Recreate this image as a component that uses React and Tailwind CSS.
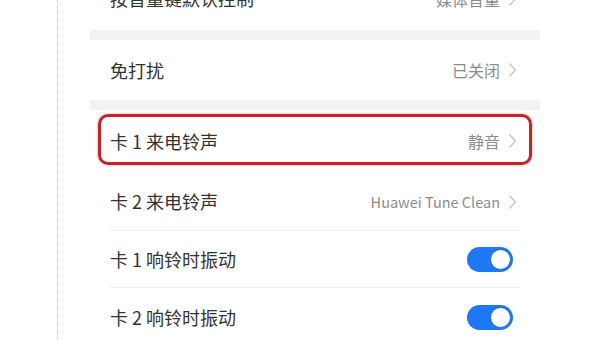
import { useState } from "react";

const font = { fontFamily: '"Noto Sans CJK SC", "Noto Sans", sans-serif' };

// thin grey arrow at the end of a row
function Chevron() {
  return (
    <svg width="9" height="16" viewBox="0 0 9 16" className="ml-[8px] shrink-0">
      <polyline
        points="1.5,1.5 7.5,8 1.5,14.5"
        fill="none"
        stroke="#c4c4c4"
        strokeWidth="1.3"
      />
    </svg>
  );
}

function Toggle({ on, onClick }) {
  return (
    <button
      onClick={onClick}
      className={`mr-[4px] w-[46px] h-[25px] rounded-full flex items-center p-[2px] ${
        on ? "bg-[#1f78f3] justify-end" : "bg-[#d6d6d6] justify-start"
      }`}
    >
      <span className="block w-[21px] h-[21px] rounded-full bg-white border border-[#1a66d0]" />
    </button>
  );
}

function Row({ label, value, toggle, height, divider, children }) {
  return (
    <div className={`relative ${height}`}>
      <div className="h-full flex items-center pl-[20px] pr-[23px]">
        <span className="text-[18px] text-[#333333] flex-1">{label}</span>
        {value && (
          <span className="flex items-center text-[16px] text-[#8c8c8c]">
            {value}
            <Chevron />
          </span>
        )}
        {toggle}
      </div>
      {divider && (
        <div className="absolute bottom-0 left-[20px] right-[20px] h-px bg-[#ececec]" />
      )}
      {children}
    </div>
  );
}

export default function App() {
  const [vib1, setVib1] = useState(true);
  const [vib2, setVib2] = useState(true);

  return (
    <div className="w-[600px] h-[340px] overflow-hidden bg-white flex" style={font}>
      {/* page edge */}
      <div className="w-[57px] shrink-0" />
      <div className="w-0 h-full border-l border-dotted border-[#c9c9c9]" />
      <div className="w-[32px] shrink-0" />

      {/* settings list */}
      <div className="w-[450px] shrink-0 -mt-[33px]">
        <Row label="按音量键默认控制" value="媒体音量" height="h-[63px]" />
        <div className="h-[10px] bg-[#f3f3f3]" />
        <Row label="免打扰" value="已关闭" height="h-[60px]" />
        <div className="h-[10px] bg-[#f3f3f3]" />
        <Row label="卡 1 来电铃声" value="静音" height="h-[62px]">
          {/* highlight box */}
          <div className="absolute left-[8px] right-[8px] top-[4px] bottom-[7px] rounded-[10px] border-[3px] border-[#c3242c] shadow-[0_0_3px_rgba(195,36,44,0.45)]" />
        </Row>
        <Row
          label="卡 2 来电铃声"
          value={<span className="text-[14.5px]">Huawei Tune Clean</span>}
          height="h-[59px]"
          divider
        />
        <Row
          label="卡 1 响铃时振动"
          height="h-[57px]"
          divider
          toggle={<Toggle on={vib1} onClick={() => setVib1(!vib1)} />}
        />
        <Row
          label="卡 2 响铃时振动"
          height="h-[58px]"
          toggle={<Toggle on={vib2} onClick={() => setVib2(!vib2)} />}
        />
      </div>
    </div>
  );
}
